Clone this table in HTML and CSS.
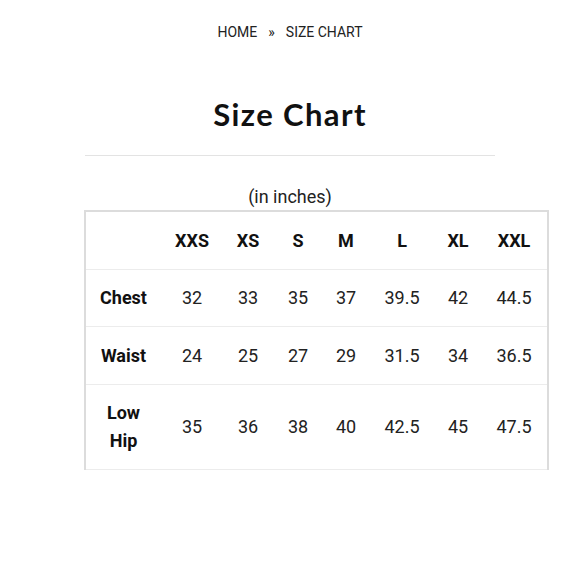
FILE: index.html
```html
<!DOCTYPE html>
<html>
<head>
<meta charset="utf-8">
<link rel="stylesheet" href="styles.css">
</head>
<body>
<nav class="crumbs"><span>HOME</span><span class="sep">»</span><span>SIZE CHART</span></nav>
<main class="page">
  <h1 class="title">Size Chart</h1>
  <hr class="rule">
  <p class="unit">(in inches)</p>
  <table class="chart">
    <thead>
      <tr><th></th><th>XXS</th><th>XS</th><th>S</th><th>M</th><th>L</th><th>XL</th><th>XXL</th></tr>
    </thead>
    <tbody>
      <tr><th>Chest</th><td>32</td><td>33</td><td>35</td><td>37</td><td>39.5</td><td>42</td><td>44.5</td></tr>
      <tr><th>Waist</th><td>24</td><td>25</td><td>27</td><td>29</td><td>31.5</td><td>34</td><td>36.5</td></tr>
      <tr><th>Low Hip</th><td>35</td><td>36</td><td>38</td><td>40</td><td>42.5</td><td>45</td><td>47.5</td></tr>
    </tbody>
  </table>
</main>
</body>
</html>
```
FILE: styles.css
```css
html, body {
  margin: 0;
  padding: 0;
  background: #fff;
}
body {
  font-family: Roboto, "Liberation Sans", sans-serif;
  color: #222;
}
.crumbs {
  display: flex;
  justify-content: center;
  gap: 11px;
  padding-top: 22px;
  font-size: 14px;
  line-height: 20px;
  color: #222;
}
.page {
  width: 410px;
  margin-left: 85px;
}
.title {
  margin: 0;
  padding-top: 54px;
  text-align: center;
  font-family: Lato, "Open Sans", sans-serif;
  font-weight: 700;
  font-size: 31px;
  letter-spacing: 1.4px;
  line-height: 36px;
  color: #111;
}
.rule {
  margin: 23px 0 0;
  border: 0;
  border-top: 1px solid #e3e3e3;
}
.unit {
  margin: 29px 0 0;
  width: 410px;
  text-align: center;
  font-size: 18px;
  line-height: 24px;
  color: #222;
}
.chart {
  margin-top: 1px;
  margin-left: -1px;
  width: 463px;
  table-layout: fixed;
  border-collapse: collapse;
  border: 2px solid #dcdcdc;
  border-bottom: 1px solid #ececec;
  font-size: 18px;
  line-height: 28px;
}
.chart th, .chart td {
  box-sizing: border-box;
  padding: 14.5px 4px 14px;
  text-align: center;
  border-bottom: 1px solid #ececec;
}
.chart th {
  font-weight: 700;
  color: #111;
}
.chart td {
  font-weight: 400;
  color: #222;
}
.chart tr > :nth-child(1) { width: 76px; padding-left: 10px; padding-right: 10px; }
.chart tr > :nth-child(2) { width: 62px; }
.chart tr > :nth-child(3) { width: 50px; }
.chart tr > :nth-child(4) { width: 50px; }
.chart tr > :nth-child(5) { width: 46px; }
.chart tr > :nth-child(6) { width: 66px; }
.chart tr > :nth-child(7) { width: 46px; }
.chart tr > :nth-child(8) { width: 67px; }
```
